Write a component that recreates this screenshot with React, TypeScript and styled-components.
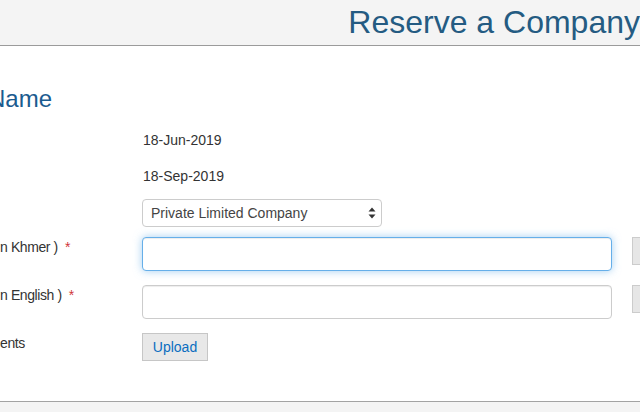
import React from "react";
import styled, { createGlobalStyle } from "styled-components";

const GlobalStyle = createGlobalStyle`
  html, body {
    margin: 0;
    padding: 0;
    background: #ffffff;
    overflow: hidden;
  }
  body {
    font-family: "Liberation Sans", Helvetica, Arial, sans-serif;
    font-size: 14px;
    color: #333333;
  }
  * { box-sizing: border-box; }
`;

const Page = styled.div`
  width: 640px;
  height: 412px;
  display: flex;
  flex-direction: column;
  overflow: hidden;
`;

const Header = styled.header`
  height: 46px;
  flex: none;
  background: #f4f4f4;
  border-bottom: 1px solid #9b9b9b;
  display: flex;
  justify-content: flex-end;
  align-items: flex-start;
  padding-top: 4px;
  overflow: hidden;
`;

const Title = styled.h1`
  margin: 0;
  font-size: 32px;
  line-height: 36px;
  font-weight: normal;
  color: #245b82;
  white-space: nowrap;
`;

const Main = styled.main`
  flex: 1;
  display: flex;
  flex-direction: column;
  padding-top: 40px;
  overflow: hidden;
`;

const SectionTitle = styled.h2`
  margin: 0 0 18px -12px;
  font-size: 24px;
  line-height: 26px;
  font-weight: normal;
  color: #1b5b8f;
  white-space: nowrap;
`;

const Form = styled.div`
  display: flex;
  flex-direction: column;
`;

const Row = styled.div<{ $mb?: number }>`
  display: grid;
  grid-template-columns: 142px 470px 1fr;
  column-gap: 0;
  align-items: start;
  margin-bottom: ${(p) => p.$mb ?? 0}px;
`;

const Label = styled.div<{ $offset?: number }>`
  font-size: 14px;
  letter-spacing: -0.4px;
  line-height: 20px;
  color: #333333;
  white-space: nowrap;
  margin-top: ${(p) => p.$offset ?? 0}px;
`;

const Required = styled.span`
  color: #d0353a;
  margin-left: 7px;
`;

const Value = styled.div`
  font-size: 14px;
  line-height: 20px;
  color: #333333;
  padding-left: 1px;
`;

const SelectWrap = styled.div`
  position: relative;
  width: 240px;
`;

const Select = styled.select`
  appearance: none;
  -webkit-appearance: none;
  width: 240px;
  height: 28px;
  border: 1px solid #cccccc;
  border-radius: 4px;
  background: #ffffff;
  padding: 0 24px 0 8px;
  font-family: "Liberation Sans", Helvetica, Arial, sans-serif;
  font-size: 14px;
  color: #444444;
  outline: none;
`;

const SelectArrow = styled.svg`
  position: absolute;
  right: 6px;
  top: 8px;
  pointer-events: none;
`;

const TextInput = styled.input<{ $focused?: boolean }>`
  width: 470px;
  height: 34px;
  border-radius: 4px;
  background: #ffffff;
  padding: 6px 12px;
  font-family: "Liberation Sans", Helvetica, Arial, sans-serif;
  font-size: 14px;
  outline: none;
  border: 1px solid ${(p) => (p.$focused ? "#66afe9" : "#cccccc")};
  box-shadow: ${(p) =>
    p.$focused
      ? "inset 0 1px 1px rgba(0,0,0,.075), 0 0 8px rgba(102,175,233,.6)"
      : "inset 0 1px 1px rgba(0,0,0,.075)"};
`;

const SideButton = styled.button`
  margin-left: 20px;
  width: 60px;
  height: 28px;
  background: #e6e6e6;
  border: 1px solid #cccccc;
  border-radius: 0;
  padding: 0;
`;

const UploadButton = styled.button`
  height: 28px;
  width: 66px;
  padding: 0;
  background: #e8e8e8;
  border: 1px solid #c6c6c6;
  border-radius: 0;
  font-family: "Liberation Sans", Helvetica, Arial, sans-serif;
  font-size: 14px;
  color: #0b6ec0;
  cursor: pointer;
`;

const Footer = styled.footer`
  height: 11px;
  flex: none;
  background: #f4f4f4;
  border-top: 1px solid #a3a3a3;
`;

export default function App() {
  return (
    <>
      <GlobalStyle />
      <Page>
        <Header>
          <Title>Reserve a Company</Title>
        </Header>
        <Main>
          <SectionTitle>Name</SectionTitle>
          <Form>
            <Row $mb={16}>
              <Label />
              <Value>18-Jun-2019</Value>
            </Row>
            <Row $mb={13}>
              <Label />
              <Value>18-Sep-2019</Value>
            </Row>
            <Row $mb={10}>
              <Label />
              <SelectWrap>
                <Select defaultValue="plc">
                  <option value="plc">Private Limited Company</option>
                </Select>
                <SelectArrow width="8" height="12" viewBox="0 0 8 12">
                  <path d="M4 0.5 L7.5 4.5 L0.5 4.5 Z" fill="#333" />
                  <path d="M4 11.5 L7.5 7.5 L0.5 7.5 Z" fill="#333" />
                </SelectArrow>
              </SelectWrap>
            </Row>
            <Row $mb={14}>
              <Label>
                n Khmer )<Required>*</Required>
              </Label>
              <TextInput $focused />
              <SideButton />
            </Row>
            <Row $mb={14}>
              <Label>
                n English )<Required>*</Required>
              </Label>
              <TextInput />
              <SideButton />
            </Row>
            <Row>
              <Label>ents</Label>
              <div>
                <UploadButton>Upload</UploadButton>
              </div>
            </Row>
          </Form>
        </Main>
        <Footer />
      </Page>
    </>
  );
}
